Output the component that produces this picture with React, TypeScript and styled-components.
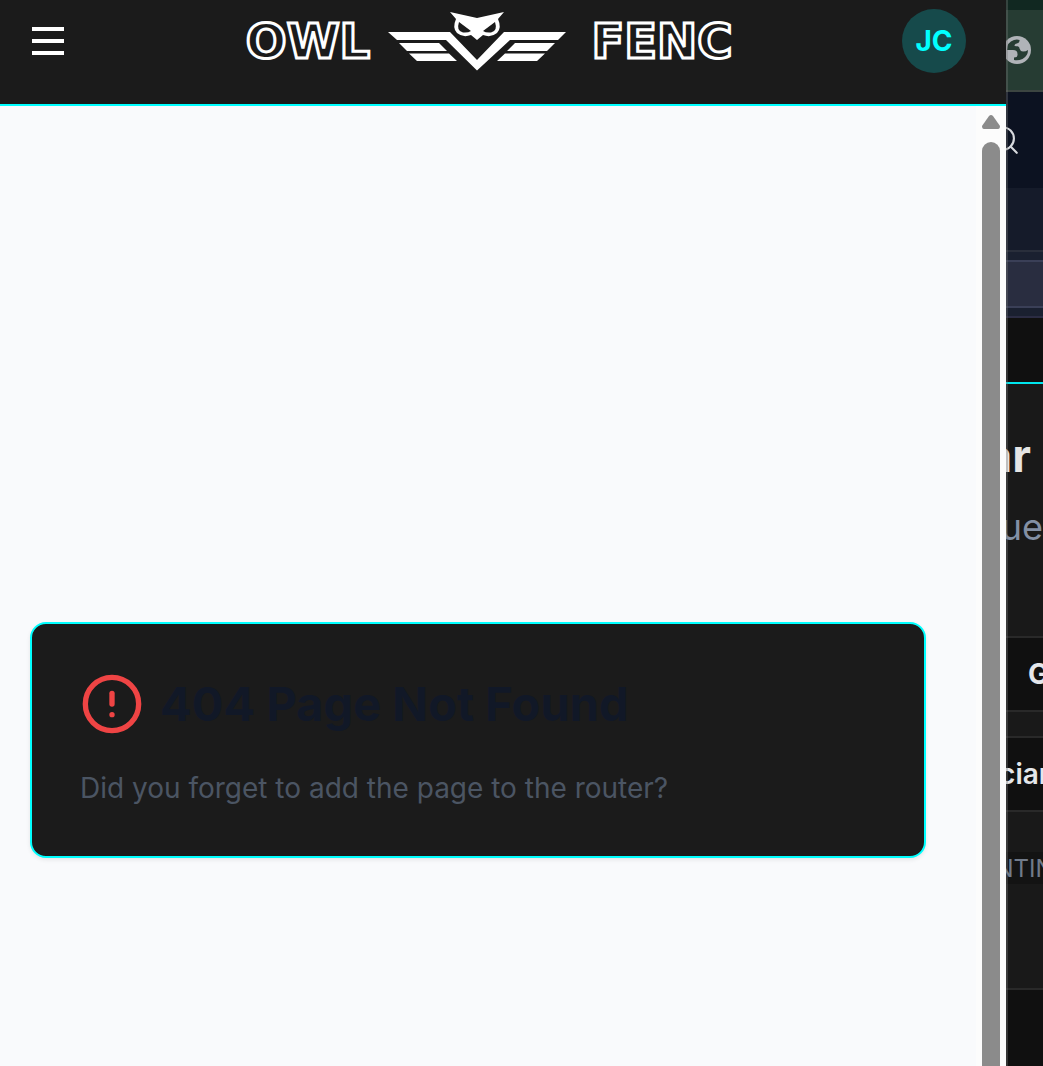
import React from "react";
import styled, { createGlobalStyle } from "styled-components";
import { CircleAlert, Search } from "lucide-react";

const GlobalStyle = createGlobalStyle`
  * { box-sizing: border-box; }
  body {
    margin: 0;
    background: #191919;
    font-family: Inter, "Liberation Sans", sans-serif;
  }
`;

const Shell = styled.div`
  display: flex;
  min-height: 100vh;
`;

const AppWindow = styled.div`
  flex: 1;
  min-width: 0;
  display: flex;
  flex-direction: column;
  background: #f9fafc;
`;

const Header = styled.header`
  display: grid;
  grid-template-columns: 64px 1fr 64px;
  align-items: start;
  height: 106px;
  padding: 8px 40px 0 16px;
  background: #1b1b1b;
  border-bottom: 2px solid #00ffff;
`;

const MenuButton = styled.button`
  display: flex;
  align-items: center;
  justify-content: center;
  height: 66px;
  padding: 0;
  border: 0;
  background: none;
`;

const Logo = styled.a`
  display: flex;
  align-items: center;
  justify-content: center;
  gap: 16px;
  height: 66px;
  padding-left: 4px;
  text-decoration: none;
`;

const Wordmark = styled.span<{ $min: number }>`
  min-width: ${(p) => p.$min}px;
  text-align: center;
  font-family: "DejaVu Sans", sans-serif;
  font-size: 48px;
  line-height: 66px;
  font-weight: 700;
  color: #1b1b1b;
  -webkit-text-stroke: 3px #fff;
`;

const Avatar = styled.button`
  width: 64px;
  height: 64px;
  margin-top: 1px;
  padding: 0;
  border: 0;
  border-radius: 50%;
  background: #164a4b;
  color: #00ffff;
  font-family: inherit;
  font-size: 28px;
  font-weight: 700;
`;

const Body = styled.div`
  flex: 1;
  display: flex;
`;

const Main = styled.main`
  flex: 1;
  min-width: 0;
  padding: 516px 50px 64px 30px;
`;

const Card = styled.section`
  padding: 48px;
  border: 2px solid #00ffff;
  border-radius: 16px;
  background: #1b1b1b;
  box-shadow: 0 2px 4px rgba(0, 0, 0, 0.08);
`;

const CardHeading = styled.div`
  display: flex;
  align-items: center;
  gap: 16px;
  height: 64px;
`;

const Title = styled.h1`
  margin: 0;
  font-size: 47px;
  line-height: 64px;
  font-weight: 700;
  color: #111827;
`;

const Hint = styled.p`
  margin: 32px 0 0;
  font-size: 28px;
  line-height: 40px;
  color: #4b5563;
`;

const ScrollTrack = styled.div`
  width: 30px;
  padding: 8px 6px 0;
  display: flex;
  flex-direction: column;
  gap: 12px;
  background: #fcfcfc;
`;

const ScrollThumb = styled.div`
  flex: 1;
  border-radius: 9px 9px 0 0;
  background: #8b8b8b;
`;

const Backdrop = styled.aside`
  position: relative;
  width: 37px;
  overflow: hidden;
  display: flex;
  flex-direction: column;
  background: #191919;

  &::after {
    content: "";
    position: absolute;
    inset: 0 auto 0 0;
    width: 2px;
    background: rgba(120, 120, 120, 0.35);
  }
`;

const Band = styled.div<{
  $h: number;
  $bg: string;
  $line?: string;
  $top?: string;
  $align?: "flex-start" | "center" | "flex-end";
}>`
  flex: none;
  height: ${(p) => p.$h}px;
  display: flex;
  align-items: center;
  justify-content: ${(p) => p.$align ?? "flex-start"};
  overflow: hidden;
  background: ${(p) => p.$bg};
  border-top: ${(p) => (p.$top ? `2px solid ${p.$top}` : "0")};
  border-bottom: ${(p) => (p.$line ? `2px solid ${p.$line}` : "0")};
`;

const LastBand = styled.div`
  flex: 1;
  background: #101010;
  border-top: 2px solid #292929;
`;

const Peek = styled.span<{ $size: number; $color: string; $weight?: number; $pad?: number }>`
  flex: none;
  padding: 0 ${(p) => p.$pad ?? 0}px;
  font-size: ${(p) => p.$size}px;
  font-weight: ${(p) => p.$weight ?? 400};
  color: ${(p) => p.$color};
`;

const OwlMark = () => (
  <svg width="178" height="60" viewBox="389 11 178 60" fill="#fff" aria-hidden="true">
    <path d="M389 32H451L478 60L505 32H567L559 40H511L478 70.500L447 40H398Z" />
    <path d="M400 43H440L448 51H408Z M410 53.500H450L458 61H418Z" />
    <path d="M556 43H516L508 51H548Z M546 53.500H506L498 61H538Z" />
    <path
      fillRule="evenodd"
      d="M451 12L478 18L505 12L499 19Q503 28 498 33Q492 38 484 35L478 40L472 35Q464 38 458 33Q453 28 457 19Z M460 22Q457 31 464 32.500Q469 33 472 31Z M496 22Q499 31 492 32.500Q487 33 484 31Z"
    />
  </svg>
);

const Globe = () => (
  <svg width="28" height="28" viewBox="0 0 28 28" display="block" aria-hidden="true">
    <circle cx="14" cy="14" r="14" fill="#b0b3b8" />
    <path
      fill="#263c33"
      d="M4 14Q4 6 11 4Q14 3 16.500 4Q17 7 14 7.500Q11.500 7.500 11.500 10Q16.500 10 16.500 12.500Q17 15 20 15.500Q23 15.500 25 14Q25 20 19.500 23Q15 25 11 24V21.500Q14.500 21.500 14.500 19Q15 14 10 14Z"
    />
  </svg>
);

export default function App() {
  return (
    <Shell>
      <GlobalStyle />
      <AppWindow>
        <Header>
          <MenuButton aria-label="Open menu">
            <svg width="32" height="28" viewBox="0 0 32 28" stroke="#fff" strokeWidth="4" aria-hidden="true">
              <path d="M0 2H32M0 14H32M0 26H32" />
            </svg>
          </MenuButton>
          <Logo href="#">
            <Wordmark $min={128}>OWL</Wordmark>
            <OwlMark />
            <Wordmark $min={160}>FENC</Wordmark>
          </Logo>
          <Avatar>JC</Avatar>
        </Header>
        <Body>
          <Main>
            <Card>
              <CardHeading>
                <CircleAlert size={64} color="#ef4444" />
                <Title>404 Page Not Found</Title>
              </CardHeading>
              <Hint>Did you forget to add the page to the router?</Hint>
            </Card>
          </Main>
          <ScrollTrack aria-hidden="true">
            <svg width="18" height="16" viewBox="0 0 18 16" fill="#8b8b8b">
              <path d="M7 2Q9 0 11 2L18 12Q18 15 16 15H2Q0 15 0 12Z" />
            </svg>
            <ScrollThumb />
          </ScrollTrack>
        </Body>
      </AppWindow>
      <Backdrop>
        <Band $h={10} $bg="#112821" />
        <Band $h={82} $bg="#263c33" $line="#3c4541" $align="flex-end">
          <Peek $size={28} $color="#b0b3b8" $pad={12}>
            <Globe />
          </Peek>
        </Band>
        <Band $h={96} $bg="#0c1221" $align="flex-end">
          <Peek $size={32} $color="#d8dade" $pad={22}>
            <Search size={34} strokeWidth={1.5} display="block" />
          </Peek>
        </Band>
        <Band $h={64} $bg="#151b2a" $line="#292e3b" />
        <Band $h={8} $bg="#1a2030" />
        <Band $h={48} $bg="#292d40" $top="#3a3f57" $line="#3a3f57" />
        <Band $h={10} $bg="#1a2030" $line="#2b2c43" />
        <Band $h={66} $bg="#101010" $line="#00e6ee" />
        <Band $h={34} $bg="#191919" />
        <Band $h={74} $bg="#191919" $align="flex-end">
          <Peek $size={46} $color="#e5e5e5" $weight={700} $pad={12}>ar</Peek>
        </Band>
        <Band $h={70} $bg="#191919" $align="flex-end">
          <Peek $size={36} $color="#8390a5">ue</Peek>
        </Band>
        <Band $h={74} $bg="#191919" />
        <Band $h={76} $bg="#101010" $top="#292929" $line="#292929">
          <Peek $size={28} $color="#e5e7eb" $weight={700} $pad={22}>G</Peek>
        </Band>
        <Band $h={24} $bg="#191919" />
        <Band $h={76} $bg="#101010" $top="#292929" $line="#292929" $align="center">
          <Peek $size={28} $color="#e5e7eb" $weight={600}>ciar</Peek>
        </Band>
        <Band $h={40} $bg="#191919" />
        <Band $h={32} $bg="#131313" $align="center">
          <Peek $size={24} $color="#717b8a">NTIN</Peek>
        </Band>
        <Band $h={104} $bg="#191919" />
        <LastBand />
      </Backdrop>
    </Shell>
  );
}
